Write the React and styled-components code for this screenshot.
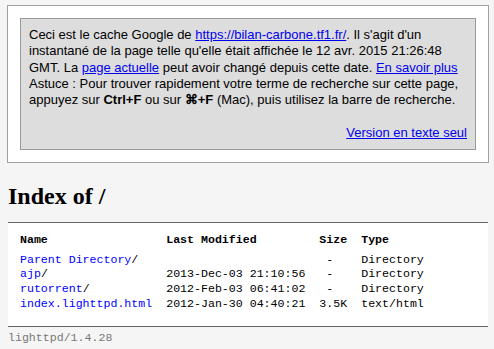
import React from "react";
import styled, { createGlobalStyle } from "styled-components";

const GlobalStyle = createGlobalStyle`
  html, body { margin: 0; padding: 0; }
  body { background: #f5f5f5; }
`;

const Page = styled.div`
  padding: 5px 6px 0 8px;
`;

const CacheOuter = styled.div`
  margin: 0 -1px;
  border: 1px solid #a0a0a0;
  background: #fff;
  padding: 12px;
`;

const CacheInner = styled.div`
  background: #dddddd;
  border: 1px solid #999;
  padding: 8px;
  color: #000;
  font-family: "Liberation Sans", Arial, sans-serif;
  font-size: 13px;
  line-height: 16.25px;
  text-align: left;
`;

const CacheLink = styled.a`
  color: #0000ee;
  text-decoration: underline;
`;

const Strong = styled.b`
  font-weight: bold;
`;

const VersionRow = styled.div`
  margin-top: 16.25px;
  text-align: right;
`;

const Heading = styled.h2`
  margin: 20px 0 12px;
  font-family: "Liberation Serif", "Times New Roman", serif;
  font-size: 24px;
  line-height: 27px;
  font-weight: bold;
  color: #000;
`;

const List = styled.div`
  background: #fff;
  border-top: 1px solid #646464;
  border-bottom: 1px solid #646464;
  padding: 10px 0 14px;
`;

const Table = styled.table`
  margin-left: 12px;
  border-collapse: collapse;
  border-spacing: 0;
`;

const Th = styled.th`
  font-family: "Liberation Mono", "Courier New", monospace;
  font-size: 11.6px;
  line-height: 14.8px;
  font-weight: bold;
  text-align: ${(p) => (p.$right ? "right" : "left")};
  padding: 0 14px 5px 0;
  white-space: pre;
  color: #000;
`;

const Td = styled.td`
  font-family: "Liberation Mono", "Courier New", monospace;
  font-size: 11.6px;
  line-height: 14.8px;
  text-align: ${(p) => (p.$right ? "right" : "left")};
  padding: 0 14px 0 0;
  white-space: pre;
  color: #000;
`;

const FileLink = styled.a`
  color: #0000ff;
  text-decoration: none;
`;

const Foot = styled.div`
  font-family: "Liberation Mono", "Courier New", monospace;
  font-size: 11.6px;
  line-height: 14.8px;
  color: #787878;
  padding-top: 4px;
`;

const rows = [
  { name: "Parent Directory", slash: true, date: "\u00a0", size: "-\u00a0\u00a0", type: "Directory" },
  { name: "ajp", slash: true, date: "2013-Dec-03 21:10:56", size: "-\u00a0\u00a0", type: "Directory" },
  { name: "rutorrent", slash: true, date: "2012-Feb-03 06:41:02", size: "-\u00a0\u00a0", type: "Directory" },
  { name: "index.lighttpd.html", slash: false, date: "2012-Jan-30 04:40:21", size: "3.5K", type: "text/html" },
];

export default function App() {
  return (
    <>
      <GlobalStyle />
      <Page>
        <CacheOuter>
          <CacheInner>
            Ceci est le cache Google de{" "}
            <CacheLink href="#">https://bilan-carbone.tf1.fr/</CacheLink>. Il s'agit d'un
            instantané de la page telle qu'elle était affichée le 12 avr. 2015 21:26:48 GMT. La{" "}
            <CacheLink href="#">page actuelle</CacheLink> peut avoir changé depuis cette date.{" "}
            <CacheLink href="#">En savoir plus</CacheLink>
            <br />
            Astuce : Pour trouver rapidement votre terme de recherche sur cette page, appuyez sur{" "}
            <Strong>Ctrl+F</Strong> ou sur <Strong>⌘+F</Strong> (Mac), puis utilisez la barre de
            recherche.
            <VersionRow>
              <CacheLink href="#">Version en texte seul</CacheLink>
            </VersionRow>
          </CacheInner>
        </CacheOuter>
        <Heading>Index of /</Heading>
        <List>
          <Table>
            <thead>
              <tr>
                <Th>Name</Th>
                <Th>Last Modified</Th>
                <Th $right>Size</Th>
                <Th>Type</Th>
              </tr>
            </thead>
            <tbody>
              {rows.map((r) => (
                <tr key={r.name}>
                  <Td>
                    <FileLink href="#">{r.name}</FileLink>
                    {r.slash ? "/" : ""}
                  </Td>
                  <Td>{r.date}</Td>
                  <Td $right>{r.size}</Td>
                  <Td>{r.type}</Td>
                </tr>
              ))}
            </tbody>
          </Table>
        </List>
        <Foot>lighttpd/1.4.28</Foot>
      </Page>
    </>
  );
}
